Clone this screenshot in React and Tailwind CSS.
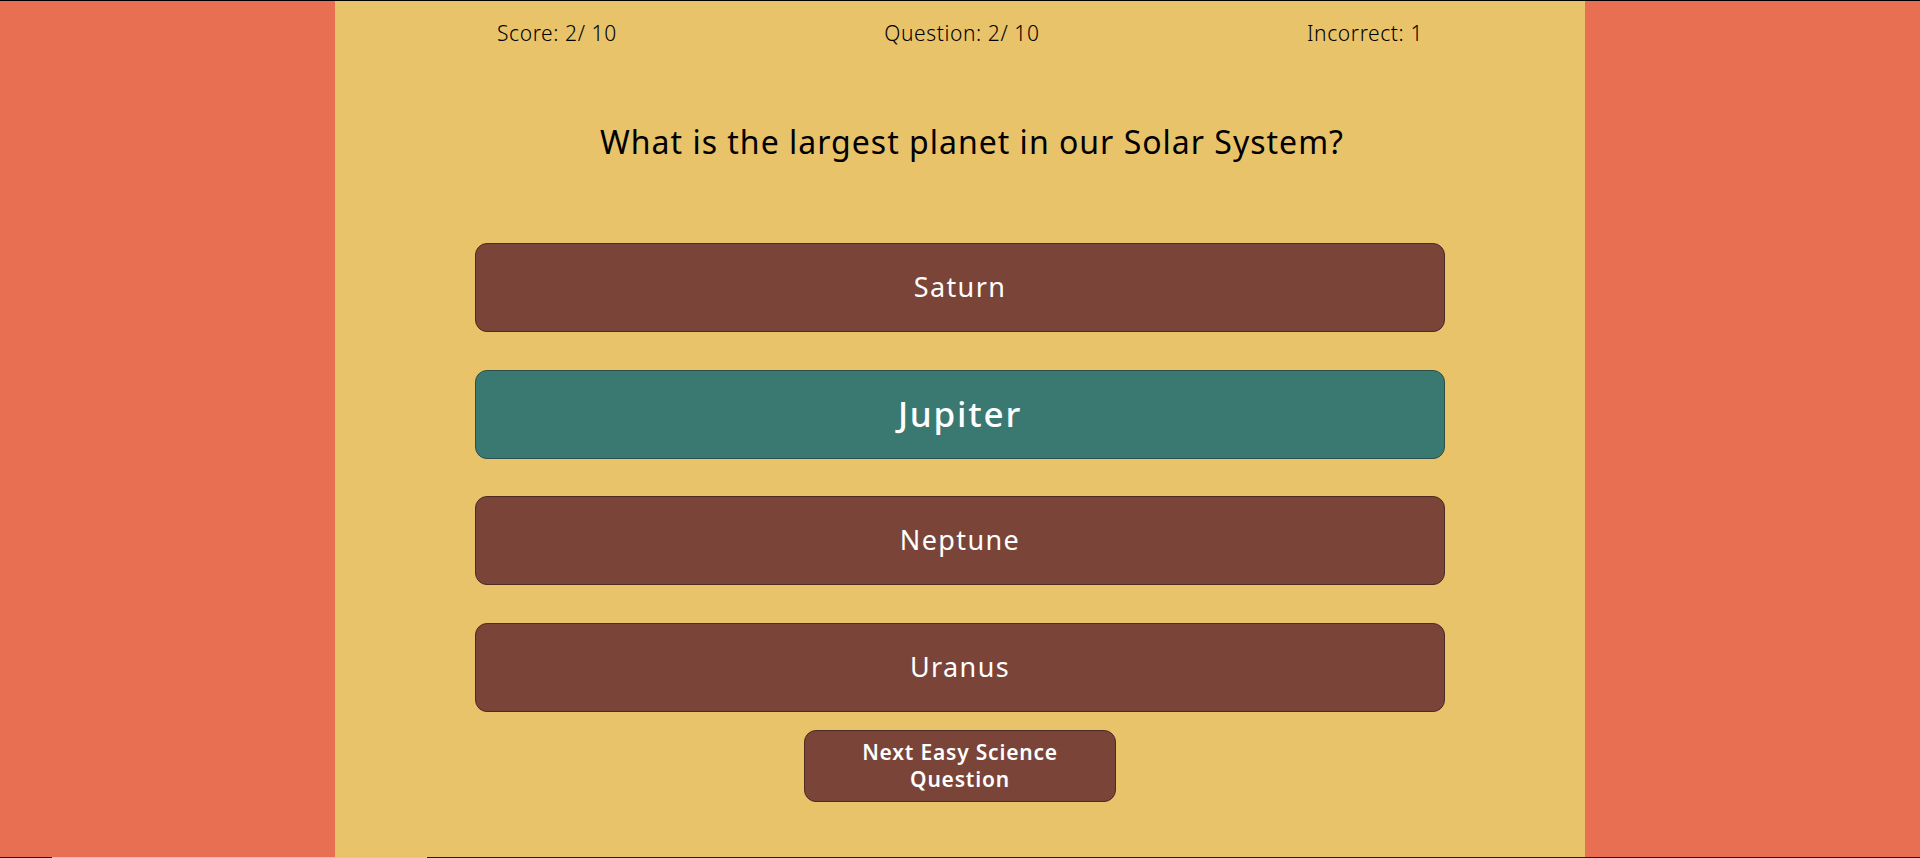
export default function App() {
  const answers = [
    { t: "Saturn", ok: false },
    { t: "Jupiter", ok: true },
    { t: "Neptune", ok: false },
    { t: "Uranus", ok: false },
  ];
  const font = { fontFamily: '"Noto Sans", "Open Sans", sans-serif' };
  return (
    <div className="w-full h-[858px] flex flex-col bg-[#e86f51]" style={font}>
      <div className="h-px bg-black w-full" />
      <div className="flex-1 flex">
        <div className="flex-1 bg-[#e86f51]" />
        <div className="w-[1250px] bg-[#e8c36a] flex flex-col items-center">
          <div className="w-[926px] flex justify-between pt-[20px] text-[21px] leading-[25px] font-light tracking-[0.6px] text-black">
            <span>Score: 2/ 10</span>
            <span>Question: 2/ 10</span>
            <span>Incorrect: 1</span>
          </div>
          <h1 className="mt-[74px] pl-[24px] text-[32px] leading-[44px] tracking-[1px] text-black">
            What is the largest planet in our Solar System?
          </h1>
          <div className="mt-[79px] flex flex-col gap-[37.5px]">
            {answers.map((a) => (
              <button
                key={a.t}
                className={
                  a.ok
                    ? "w-[970px] h-[89px] rounded-[12px] border border-[#2d4f4b] bg-[#3a7872] text-white text-[35px] font-medium tracking-[1.8px]"
                    : "w-[970px] h-[89px] rounded-[12px] border border-[#4e2a22] bg-[#7a4438] text-white text-[27px] tracking-[1.4px]"
                }
              >
                {a.t}
              </button>
            ))}
          </div>
          <button className="mt-[18px] w-[312px] h-[72px] rounded-[12px] border border-[#4e2a22] bg-[#7a4438] text-white text-[21px] font-semibold leading-[27px] tracking-[0.8px]">
            Next Easy Science
            <br />
            Question
          </button>
        </div>
        <div className="flex-1 bg-[#e86f51]" />
      </div>
      <div className="h-px w-full flex bg-[#1e1e1e]">
        <div className="w-[52px]" />
        <div className="w-[375px] bg-[#c8c8c8]" />
      </div>
    </div>
  );
}
